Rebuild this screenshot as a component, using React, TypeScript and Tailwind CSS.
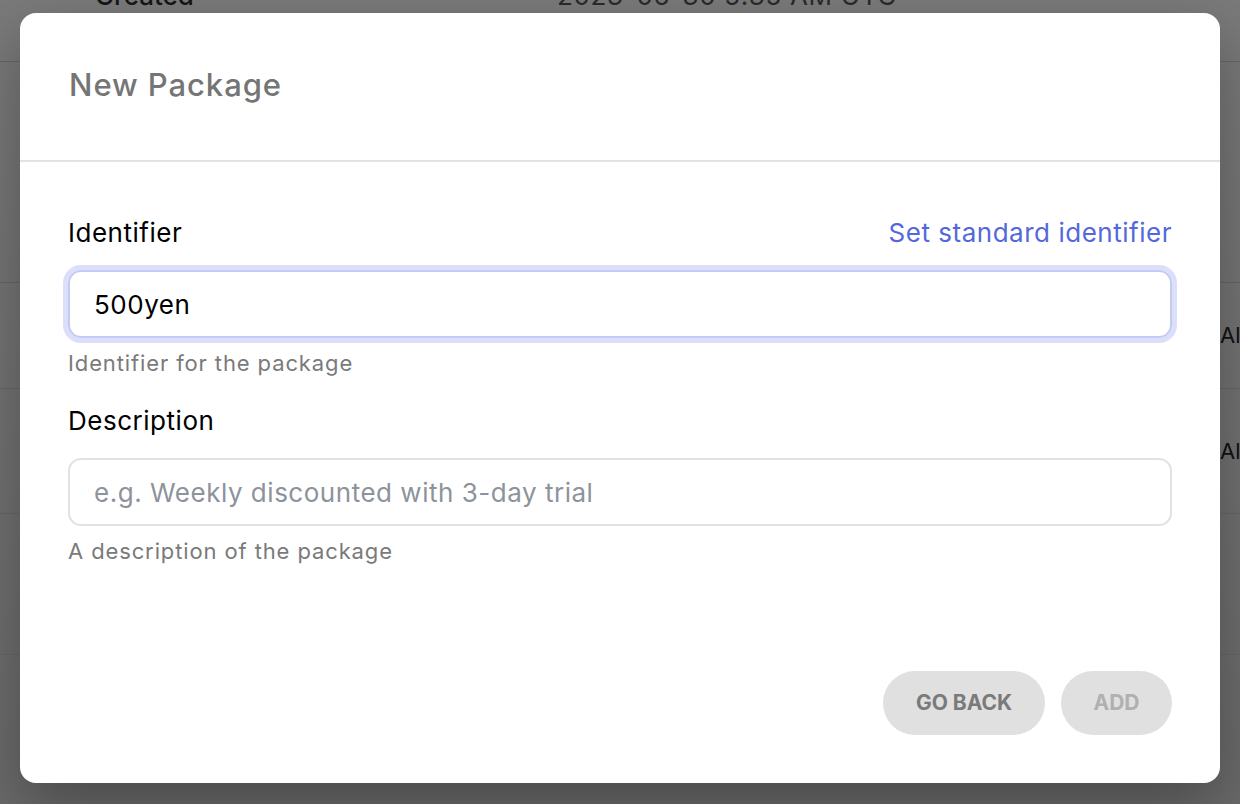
const rows = [
  { h: "h-[132px]", left: "Created", mid: "2023-06-30 5:35 AM UTC", right: "" },
  { h: "h-[221px]", left: "", mid: "", right: "" },
  { h: "h-[106px]", left: "", mid: "", right: "All" },
  { h: "h-[125px]", left: "", mid: "", right: "All" },
  { h: "h-[141px]", left: "", mid: "", right: "" },
];

const Field = ({
  label,
  action,
  value,
  placeholder,
  hint,
  focused,
}: {
  label: string;
  action?: string;
  value?: string;
  placeholder?: string;
  hint: string;
  focused?: boolean;
}) => (
  <div className="flex flex-col">
    <div className="flex items-center justify-between h-[32px]">
      <label className="text-[26px] tracking-[0.02em] text-black">{label}</label>
      {action && (
        <button className="text-[26px] tracking-[0.02em] text-[#5468dc]">
          {action}
        </button>
      )}
    </div>
    <input
      readOnly
      value={value}
      placeholder={placeholder}
      className={
        focused
          ? "mt-[22px] h-[68px] w-full rounded-[13px] border-2 border-[#c3cbf4] px-[24px] text-[26px] tracking-[0.02em] text-black outline-none shadow-[0_0_0_5px_#dbdff9]"
          : "mt-[22px] h-[68px] w-full rounded-[13px] border-2 border-[#e2e2e2] px-[24px] text-[26px] tracking-[0.02em] text-black outline-none placeholder:text-[#8d939b]"
      }
    />
    <p className="mt-[11px] h-[28px] leading-[28px] text-[22px] tracking-[0.04em] text-[#7a7a7a]">
      {hint}
    </p>
  </div>
);

export default function App() {
  return (
    <div
      className="relative h-[804px] w-full overflow-hidden bg-gradient-to-b from-[#7a7a7a] to-[#6a6a6a]"
      style={{ fontFamily: "Inter, 'Noto Sans', sans-serif" }}
    >
      {/* page behind the overlay */}
      <div className="-mt-[70px] flex flex-col">
        {rows.map((r, i) => (
          <div
            key={i}
            className={`${r.h} flex items-center border-b border-[#666] text-[26px]`}
          >
            <div className="w-[557px] pl-[95px] font-medium text-[#151515]">
              {r.left}
            </div>
            <div className="flex-1 text-[#2a2a2a] tracking-wide">{r.mid}</div>
            <div className="w-[20px] text-[22px] text-[#111] overflow-hidden whitespace-nowrap">
              {r.right}
            </div>
          </div>
        ))}
      </div>

      {/* modal */}
      <div className="absolute left-[20px] top-[13px] flex h-[770px] w-[1200px] flex-col rounded-[16px] bg-white shadow-[0_24px_60px_rgba(0,0,0,0.3)]">
        <div className="flex h-[149px] items-center border-b-2 border-[#e2e2e2] px-[49px] pb-[2px]">
          <h2 className="text-[31px] font-medium tracking-[0.03em] text-[#757575]">
            New Package
          </h2>
        </div>
        <div className="flex flex-1 flex-col px-[48px] pt-[54px] pb-[48px]">
          <Field
            label="Identifier"
            action="Set standard identifier"
            value="500yen"
            hint="Identifier for the package"
            focused
          />
          <div className="mt-[27px]">
            <Field
              label="Description"
              placeholder="e.g. Weekly discounted with 3-day trial"
              hint="A description of the package"
            />
          </div>
          <div className="mt-auto flex justify-end gap-[16px]">
            <button className="h-[64px] w-[162px] rounded-full bg-[#e0e0e0] text-[21px] font-bold text-[#7a7a7a]">
              GO BACK
            </button>
            <button className="h-[64px] w-[111px] rounded-full bg-[#e0e0e0] text-[21px] font-bold text-[#b0b0b0]">
              ADD
            </button>
          </div>
        </div>
      </div>
    </div>
  );
}
